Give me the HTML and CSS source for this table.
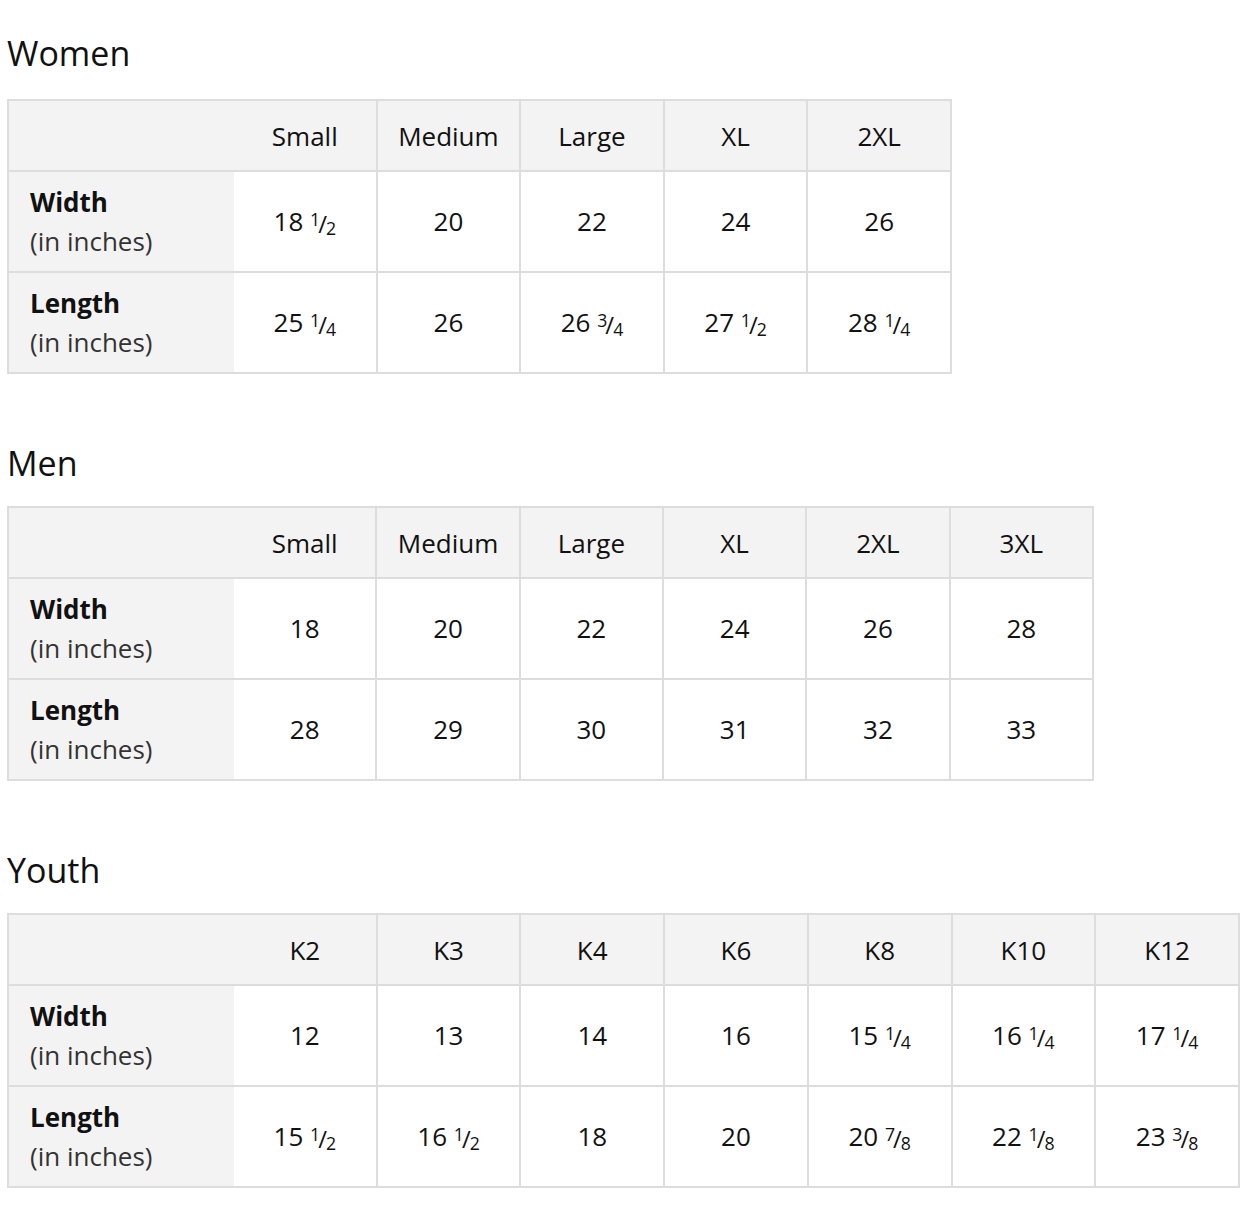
FILE: index.html
```html
<!DOCTYPE html>
<html>
<head>
<meta charset="utf-8">
<link rel="stylesheet" href="styles.css">
</head>
<body>
<section class="sec first">
  <h2 class="title">Women</h2>
  <table class="chart w5">
    <tr class="head"><th class="lbl"></th><th>Small</th><th>Medium</th><th>Large</th><th>XL</th><th>2XL</th></tr>
    <tr><td class="lbl"><b>Width</b><span>(in inches)</span></td><td>18 <span class="fr"><span class="n">1</span><span class="sl">/</span><span class="d">2</span></span></td><td>20</td><td>22</td><td>24</td><td>26</td></tr>
    <tr><td class="lbl"><b>Length</b><span>(in inches)</span></td><td>25 <span class="fr"><span class="n">1</span><span class="sl">/</span><span class="d">4</span></span></td><td>26</td><td>26 <span class="fr"><span class="n">3</span><span class="sl">/</span><span class="d">4</span></span></td><td>27 <span class="fr"><span class="n">1</span><span class="sl">/</span><span class="d">2</span></span></td><td>28 <span class="fr"><span class="n">1</span><span class="sl">/</span><span class="d">4</span></span></td></tr>
  </table>
</section>
<section class="sec">
  <h2 class="title">Men</h2>
  <table class="chart w6">
    <tr class="head"><th class="lbl"></th><th>Small</th><th>Medium</th><th>Large</th><th>XL</th><th>2XL</th><th>3XL</th></tr>
    <tr><td class="lbl"><b>Width</b><span>(in inches)</span></td><td>18</td><td>20</td><td>22</td><td>24</td><td>26</td><td>28</td></tr>
    <tr><td class="lbl"><b>Length</b><span>(in inches)</span></td><td>28</td><td>29</td><td>30</td><td>31</td><td>32</td><td>33</td></tr>
  </table>
</section>
<section class="sec">
  <h2 class="title">Youth</h2>
  <table class="chart w7">
    <tr class="head"><th class="lbl"></th><th>K2</th><th>K3</th><th>K4</th><th>K6</th><th>K8</th><th>K10</th><th>K12</th></tr>
    <tr><td class="lbl"><b>Width</b><span>(in inches)</span></td><td>12</td><td>13</td><td>14</td><td>16</td><td>15 <span class="fr"><span class="n">1</span><span class="sl">/</span><span class="d">4</span></span></td><td>16 <span class="fr"><span class="n">1</span><span class="sl">/</span><span class="d">4</span></span></td><td>17 <span class="fr"><span class="n">1</span><span class="sl">/</span><span class="d">4</span></span></td></tr>
    <tr><td class="lbl"><b>Length</b><span>(in inches)</span></td><td>15 <span class="fr"><span class="n">1</span><span class="sl">/</span><span class="d">2</span></span></td><td>16 <span class="fr"><span class="n">1</span><span class="sl">/</span><span class="d">2</span></span></td><td>18</td><td>20</td><td>20 <span class="fr"><span class="n">7</span><span class="sl">/</span><span class="d">8</span></span></td><td>22 <span class="fr"><span class="n">1</span><span class="sl">/</span><span class="d">8</span></span></td><td>23 <span class="fr"><span class="n">3</span><span class="sl">/</span><span class="d">8</span></span></td></tr>
  </table>
</section>
</body>
</html>
```
FILE: styles.css
```css
html, body {
  background: #ffffff;
}
body {
  margin: 0;
  padding: 0 0 0 7px;
  font-family: "Open Sans", "Noto Sans", "DejaVu Sans", sans-serif;
  color: #111111;
}
.sec {
  margin-top: 69px;
}
.sec.first {
  margin-top: 33px;
}
.title {
  margin: 0 0 23px 0;
  font-size: 34px;
  line-height: 40px;
  font-weight: 400;
}
.first .title {
  margin-bottom: 26px;
}
.chart {
  border-collapse: separate;
  border-spacing: 0;
  table-layout: fixed;
  border-top: 2px solid #dddddd;
  border-left: 2px solid #dddddd;
  font-size: 26px;
}
.chart.w5 { width: 945px; }
.chart.w6 { width: 1087px; }
.chart.w7 { width: 1233px; }
.chart th, .chart td {
  border-right: 2px solid #dddddd;
  border-bottom: 2px solid #dddddd;
  text-align: center;
  padding: 0;
  font-weight: 400;
}
.chart .lbl {
  border-right: none;
  background: #f3f3f3;
  text-align: left;
  padding-left: 21px;
  width: 204px;
}
.head th {
  height: 69px;
  background: #f3f3f3;
}
.chart td {
  height: 99px;
  line-height: 39px;
}
.lbl b {
  display: block;
  font-weight: 700;
}
.lbl span {
  display: block;
  color: #333333;
}
.fr {
  white-space: nowrap;
  display: inline-block;
  position: relative;
  top: 2px;
}
.fr .n, .fr .d {
  font-size: 0.68em;
  line-height: 1;
}
.fr .n {
  vertical-align: 0.42em;
}
.fr .d {
  vertical-align: -0.14em;
}
.fr .sl {
  display: inline-block;
  margin: 0 -1px 0 -2px;
  line-height: 1;
  font-size: 0.92em;
}
```
